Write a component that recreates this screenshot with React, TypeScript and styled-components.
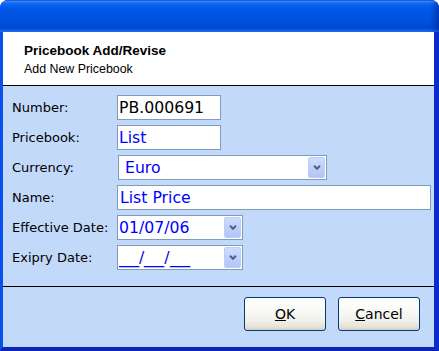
import React from "react";
import styled, { createGlobalStyle } from "styled-components";

const Global = createGlobalStyle`
  html, body { margin: 0; padding: 0; background: #ffffff; }
  body { font-family: "DejaVu Sans", Verdana, sans-serif; }
  * { box-sizing: border-box; }
`;

const Window = styled.div`
  width: 439px;
  height: 351px;
  display: flex;
  flex-direction: column;
  border-radius: 8px 8px 0 0;
  overflow: hidden;
  background: #0831d9;
`;

const TitleBar = styled.div`
  flex: none;
  height: 32px;
  background: linear-gradient(
    to bottom,
    #0a5ae6 0%,
    #3d8ffb 5%,
    #1069f5 10%,
    #0058ea 25%,
    #0053e1 55%,
    #004fd9 75%,
    #0049d0 86%,
    #0a5ff0 94%,
    #2a7af9 100%
  );
  box-shadow: inset -6px 0 6px -2px rgba(0, 20, 120, 0.45);
`;

const Client = styled.div`
  flex: 1;
  display: flex;
  flex-direction: column;
  background: #c3d9f9;
  border-style: solid;
  border-width: 0 5px 4px 3px;
  border-color: transparent #0a2bcb #0b24b9 #0b4fea;
`;

const Header = styled.div`
  flex: none;
  height: 54px;
  background: #ffffff;
  border-bottom: 1px solid #000000;
  padding: 10px 0 0 21px;
  display: flex;
  flex-direction: column;
`;

const Title = styled.div`
  font-family: "Liberation Sans", Arial, sans-serif;
  font-weight: bold;
  font-size: 13.5px;
  line-height: 17px;
  color: #000000;
`;

const Subtitle = styled.div`
  font-family: "Liberation Sans", Arial, sans-serif;
  font-size: 12.4px;
  line-height: 18px;
  margin-top: 1px;
  color: #000000;
`;

const Form = styled.div`
  flex: none;
  display: grid;
  grid-template-columns: 105px 1fr;
  grid-auto-rows: 25px;
  row-gap: 5px;
  padding: 9px 3px 16px 9px;
`;

const Label = styled.div`
  font-size: 13px;
  line-height: 25px;
  color: #000000;
  white-space: nowrap;
`;

const Field = styled.div<{ $w?: number; $pad?: number; $blue?: boolean; $offset?: number }>`
  width: ${(p) => (p.$w ? `${p.$w}px` : "100%")};
  height: 25px;
  margin-left: ${(p) => p.$offset ?? 0}px;
  display: flex;
  align-items: stretch;
  background: #ffffff;
  border: 1px solid #7f9db9;
  color: ${(p) => (p.$blue ? "#0000ff" : "#000000")};
  font-size: 15.7px;
  padding-left: ${(p) => p.$pad ?? 1}px;
`;

const Value = styled.div`
  flex: 1;
  line-height: 23px;
  white-space: nowrap;
  overflow: hidden;
`;

const Seg = styled.span`
  display: inline-block;
  width: 20px;
  transform: scaleX(1.28);
  transform-origin: left center;
`;

const DropButton = styled.div`
  flex: none;
  width: 17px;
  margin: 1px 1px 1px 0;
  display: flex;
  align-items: center;
  justify-content: center;
  border: 1px solid #bccdf9;
  border-radius: 2px;
  background: linear-gradient(to bottom, #cfdcfd 0%, #bed0fb 50%, #b2c5f6 100%);
`;

const Divider = styled.div`
  flex: none;
  height: 1px;
  background: #000000;
`;

const Footer = styled.div`
  flex: 1;
  display: flex;
  justify-content: flex-end;
  align-items: flex-start;
  gap: 12px;
  padding: 10px 14px 0 0;
`;

const Button = styled.button`
  width: 82px;
  height: 34px;
  border: 1px solid #003c74;
  border-radius: 3px;
  background: linear-gradient(
    to bottom,
    #ffffff 0%,
    #fbfbf8 30%,
    #f1f0eb 70%,
    #e6e3da 90%,
    #d6d0c5 100%
  );
  font-family: "DejaVu Sans", Verdana, sans-serif;
  font-size: 14px;
  color: #000000;
  padding: 0;
  display: flex;
  align-items: center;
  justify-content: center;
`;

const Chevron = () => (
  <svg width="8" height="5" viewBox="0 0 8 5">
    <polyline points="1,0.8 4,3.8 7,0.8" fill="none" stroke="#4d6185" strokeWidth="2" />
  </svg>
);

const Drop = () => (
  <DropButton>
    <Chevron />
  </DropButton>
);

export default function App() {
  return (
    <>
      <Global />
      <Window>
        <TitleBar />
        <Client>
          <Header>
            <Title>Pricebook Add/Revise</Title>
            <Subtitle>Add New Pricebook</Subtitle>
          </Header>
          <Form>
            <Label>Number:</Label>
            <Field $w={104}>
              <Value>PB.000691</Value>
            </Field>

            <Label>Pricebook:</Label>
            <Field $w={104} $blue>
              <Value>List</Value>
            </Field>

            <Label>Currency:</Label>
            <Field $w={209} $blue $pad={6} $offset={1}>
              <Value>Euro</Value>
              <Drop />
            </Field>

            <Label>Name:</Label>
            <Field $blue $pad={2}>
              <Value>List Price</Value>
            </Field>

            <Label>Effective Date:</Label>
            <Field $w={126} $blue>
              <Value>01/07/06</Value>
              <Drop />
            </Field>

            <Label>Exipry Date:</Label>
            <Field $w={126} $blue>
              <Value>
                <Seg>__</Seg>/<Seg>__</Seg>/<Seg>__</Seg>
              </Value>
              <Drop />
            </Field>
          </Form>
          <Divider />
          <Footer>
            <Button>
              <span>
                <u>O</u>K
              </span>
            </Button>
            <Button>
              <span>
                <u>C</u>ancel
              </span>
            </Button>
          </Footer>
        </Client>
      </Window>
    </>
  );
}
